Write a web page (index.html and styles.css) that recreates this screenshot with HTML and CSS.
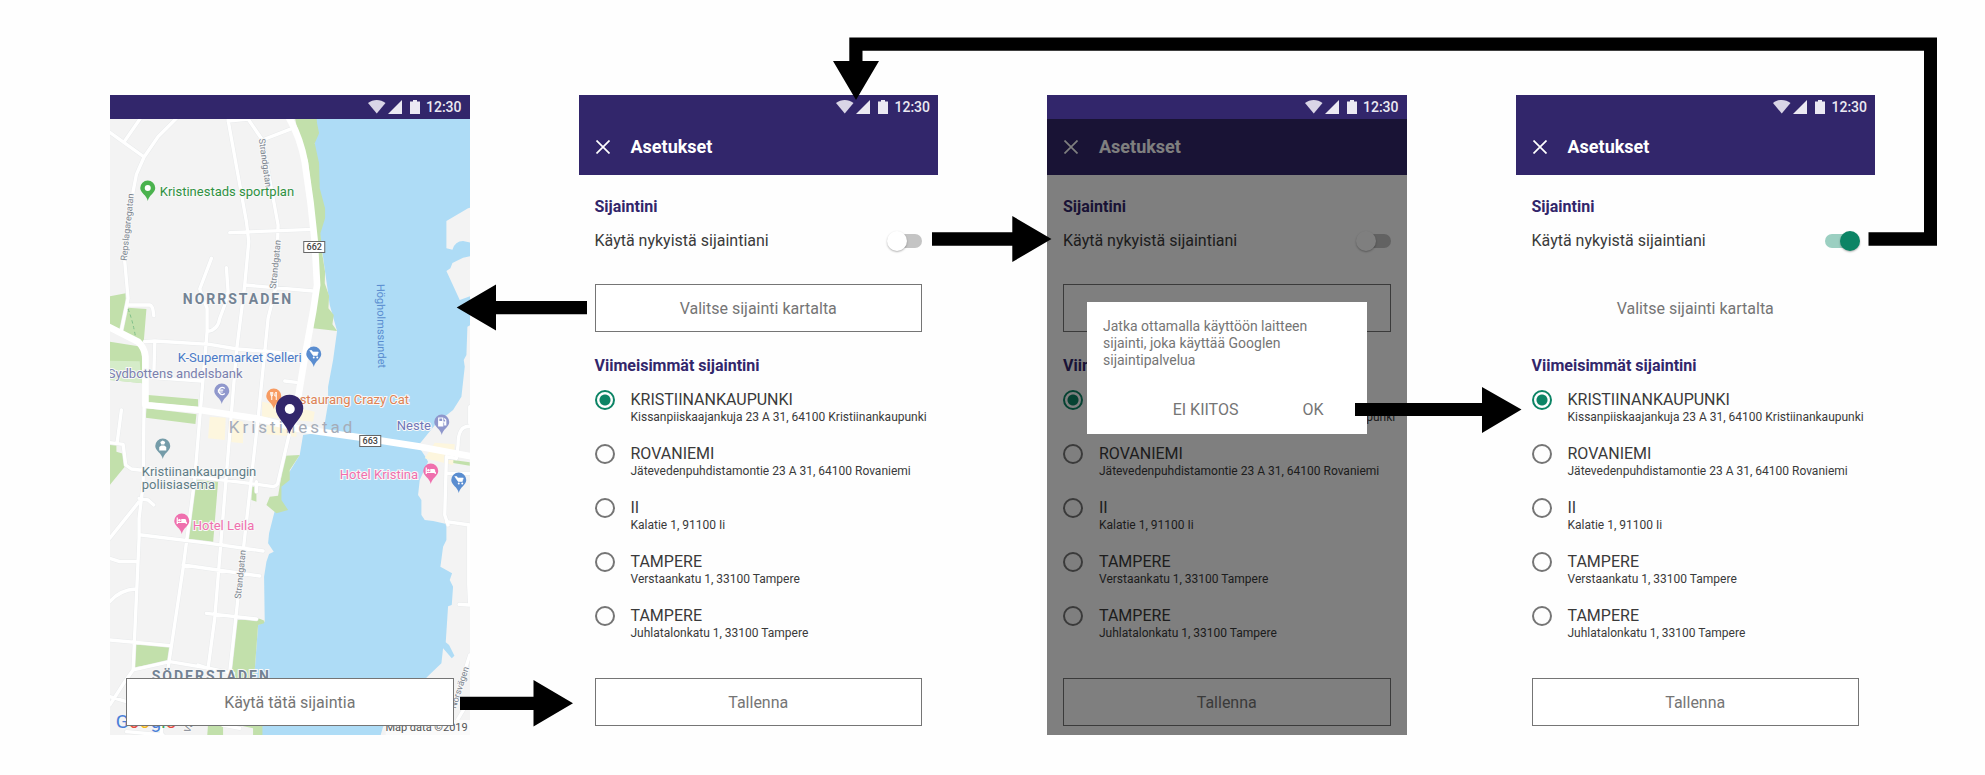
FILE: index.html
```html
<!DOCTYPE html>
<html lang="fi">
<head>
<meta charset="utf-8">
<title>Asetukset – Sijaintini</title>
<link rel="stylesheet" href="styles.css">
</head>
<body>
<svg class="sprite" aria-hidden="true">
  <symbol id="status-icons" viewBox="0 0 52 14">
    <path d="M0 3C5 -1 12.500 -1 17.500 3L8.750 13.500Z" fill="#d9d5e6"/>
    <path d="M20 14H34V0Z" fill="#ebe9f2"/>
    <path d="M42 1.500H45V0H49V1.500H52V14H42Z" fill="#ebe9f2"/>
  </symbol>
  <symbol id="close" viewBox="0 0 14 14">
    <path d="M0.500 0.500L13.500 13.500M13.500 0.500L0.500 13.500" stroke="currentColor" stroke-width="1.700" fill="none"/>
  </symbol>
  <symbol id="drop" viewBox="-8 -8 16 22" overflow="visible">
    <path d="M0 13C-1 7 -7.500 5 -7.500 0A7.500 7.500 0 0 1 7.500 0C7.500 5 1 7 0 13Z"/>
  </symbol>
</svg>

<main class="board">
  <section class="phone">
    <div class="status"><svg class="status-icons"><use href="#status-icons"/></svg><span>12:30</span></div>
    <div class="map-screen">
      <svg class="map" viewBox="0 0 360 616" preserveAspectRatio="xMidYMid slice" role="img" aria-label="Kartta">
        <rect width="361" height="616" fill="#f3f3f3"/>
        <g transform="scale(0.33333) translate(-30 -102)">
          <path class="water" d="M640 90H1120V365L1105 370L1040 408V490L1058 494Q1066 468 1090 468L1120 475V512L1090 518L1058 534L1052 550L1040 558L1080 645L1120 630V715L1103 725L1100 810L1092 825L1095 845L1085 935L1060 975L1010 1015L955 1082L975 1112L985 1130L960 1185L955 1230L965 1245V1290L975 1305L1000 1308L1040 1317V1365L1030 1385L1022 1445L1057 1465L1050 1485L1060 1505L1056 1560L1045 1564L1038 1672L1048 1680L1064 1712L1056 1720L1030 1690L1025 1735L985 1773L930 1830L850 1925L840 1960H480L465 1755L475 1620L495 1610L493 1475L500 1430L508 1407L522 1400L505 1375L508 1345L518 1305L545 1200L600 1110L610 1050L675 1040V1015L685 955V905L700 825L712 738L690 660L660 445L645 175Z"/>
          <path class="green" d="M585 95H650L652 115L658 145L645 175L658 235L660 310L676 370V400L662 445L668 510L676 560L675 595L688 632L686 670L702 690L698 718L712 738L640 730L655 620L645 400L625 230L590 120Z"/>
          <path class="green" d="M30 634L78 625V660L80 660L85 668L140 672L132 770L120 775L30 725Z"/>
          <path class="green" d="M30 770L125 785L130 895L30 885Z"/>
          <path d="M30 827L120 829L122 860L130 862V895L30 885Z" fill="#d5ecc9"/>
          <path class="green" d="M145 930L295 943V966L145 952ZM140 970L290 988L287 1017L138 998Z"/>
          <path class="green" d="M30 1080H50V1100L75 1108V1145L30 1200Z"/>
          <path class="green" d="M280 1185L355 1190L340 1373L262 1365L270 1280Z"/>
          <path class="green" d="M555 1112L600 1110L570 1155V1185L545 1205V1245L565 1275L530 1285L500 1260L510 1235L535 1232ZM455 1205H470V1250L455 1245Z"/>
          <path class="green" d="M410 1601L480 1601L494 1607L493 1615L475 1620L465 1755V1800H392Z"/>
          <path class="green" d="M108 1675L210 1685L205 1730L105 1747ZM325 1915H370V1960H322ZM425 1900H488V1960H460V1930L425 1922ZM1055 1124L1110 1132V1142L1060 1134Z"/>
          <path class="sand" d="M487 950L540 960L600 970L645 980L640 1010L487 995ZM330 995L378 998L375 1065L325 1060ZM388 1000L430 1010V1075L385 1070ZM500 1020L590 1035V1055L500 1048ZM1005 1073L1065 1078L1060 1140L975 1120Z"/>
          <g class="road-edge">
            <path id="streets" d="M20 135L72 172L133 216M72 172L122 100M235 95L175 155L133 216L110 268L100 320L75 530L85 640L65 735M85 660H150Q160 662 162 692M385 105L440 410L447 470L435 600L410 800L345 1600L325 1750L295 1740M385 108L445 102L488 165L578 130M488 165L535 420L530 600L505 700L475 1000L440 1310L408 1600L390 1760M390 443L640 433M335 520L300 612L322 670V740M322 740Q355 735 360 700L375 660L385 620L380 548M435 600L640 618M135 770L165 768L330 778L412 792L580 805M322 740L310 880L285 1180L250 1450L205 1750M165 775L162 878L305 888M555 888L590 892M133 950L130 1200L118 1300V1360L100 1755L75 1790L30 1860M30 1073L70 1078L78 1140L95 1152L285 1175L450 1195L520 1205Q535 1200 535 1190L568 1050M470 1190V1220M65 975L52 1075M118 1240L145 1245L162 1260M118 1250L30 1360M125 1350L330 1375L490 1398M30 1420L60 1430L110 1430M30 1550Q60 1515 108 1512M250 1440L480 1473M320 1585L470 1602M30 1665L212 1682M100 1755L210 1730L330 1750L400 1765M30 1835L80 1850M80 1940L190 1950M185 1920V1960M370 1920L420 1930M1110 1025Q1075 1020 1075 1080L1070 1120L1040 1115L1035 1290L1045 1320M1045 1165H1110M1110 965V1015M1040 1310L1110 1320M1107 1320V1500L1110 1560L1078 1558M1110 1710L1060 1870M1100 1860L1040 1960"/>
          </g>
          <use class="road" href="#streets"/>
          <path d="M85 672Q100 710 108 760" fill="none" stroke="#7fbf8a" stroke-width="3" stroke-dasharray="10 8"/>
          <path class="highway" d="M560 85Q600 150 615 230L632 350L645 470L652 600L640 680L618 800L585 1000L575 1030"/>
          <path class="highway" d="M20 722L115 770Q135 790 137 815V960L300 975L470 1000L590 1030L800 1060L960 1085L1120 1115"/>
        </g>
        <rect class="shield" x="194" y="122.500" width="21" height="11"/>
        <text class="shield-text" x="204.500" y="131">662</text>
        <rect class="shield" x="250" y="316.500" width="21" height="11"/>
        <text class="shield-text" x="260.500" y="325">663</text>

        <g class="street">
          <text transform="translate(149 20) rotate(82)">Strandgatan</text>
          <text transform="translate(17 142) rotate(-84)">Repslagaregatan</text>
          <text transform="translate(166 170) rotate(-84)">Strandgatan</text>
          <text transform="translate(131 480) rotate(-84)">Strandgatan</text>
          <text transform="translate(346 590) rotate(-72)">Norsvägen</text>
          <text transform="translate(80 614) rotate(-70)">Västra</text>
        </g>
        <text class="sound" transform="translate(267 165) rotate(89)">Högholmssundet</text>
        <text class="district" x="73" y="185">NORRSTADEN</text>
        <text class="district" x="42" y="562">SÖDERSTADEN</text>
        <text class="town" x="119" y="314">Kristinestad</text>
        <text class="poi" x="50" y="77" fill="#2f9142">Kristinestads sportplan</text>
        <text class="poi" x="68" y="243" fill="#4a7ac7">K-Supermarket Selleri</text>
        <text class="poi" x="-2" y="259" fill="#7a80ae">Sydbottens andelsbank</text>
        <text class="poi" x="175" y="285" fill="#dd8255">Restaurang Crazy Cat</text>
        <text class="poi" x="287" y="311" fill="#6f76b8">Neste</text>
        <text class="poi" x="32" y="357" fill="#607d86">Kristiinankaupungin</text>
        <text class="poi" x="32" y="370" fill="#607d86">poliisiasema</text>
        <text class="poi" x="230" y="360" fill="#ef70ae">Hotel Kristina</text>
        <text class="poi" x="83" y="411" fill="#ef70ae">Hotel Leila</text>

        <use href="#drop" x="30" y="61" width="16" height="22" fill="#4ab24e"/><circle cx="38" cy="69" r="3" fill="#fff"/>
        <g id="cart-a">
          <use href="#drop" x="196" y="227" width="16" height="22" fill="#5a8dd0"/>
          <path d="M200 231.500H202L203 233H208.500L207.500 236.500H203.500Z" fill="#fff" stroke="#fff" stroke-width="0.600"/><circle cx="204" cy="238.500" r="1" fill="#fff"/><circle cx="207.500" cy="238.500" r="1" fill="#fff"/>
        </g>
        <use href="#cart-a" x="145" y="126"/>
        <use href="#drop" x="104" y="264" width="16" height="22" fill="#8f97cc"/>
        <path d="M115 269.500A3.500 3.500 0 1 0 115 274.500M108 271.200H113.500M108 273H113" fill="none" stroke="#fff" stroke-width="1.200"/>
        <use href="#drop" x="156" y="269" width="16" height="22" fill="#f79b62"/>
        <path d="M161 273V275.500Q161 277 162 277V281M162 273V277M163 273V275.500Q163 277 162 277M166.500 281V273Q165 273.500 165 277H166.500" fill="none" stroke="#fff" stroke-width="1"/>
        <use href="#drop" x="324" y="295" width="16" height="22" fill="#8f97cc"/>
        <path d="M329 299H333V307H329ZM333 303H335V306H336V301L334.500 299.500" fill="none" stroke="#fff" stroke-width="1.200"/><path d="M329 302H333V307H329Z" fill="#fff"/>
        <use href="#drop" x="45" y="319" width="16" height="22" fill="#759ca9"/>
        <path d="M50.500 323L53 321.500L55.500 323L54.500 325.500H51.500ZM51.500 326.500H54.500L56.500 328V331.500H49.500V328Z" fill="#fff"/>
        <g id="bed-a">
          <use href="#drop" x="313" y="344" width="16" height="22" fill="#ef70ae"/>
          <path d="M316.500 348.500V355M316.500 353.500H325.500V355" fill="none" stroke="#fff" stroke-width="1.200"/><path d="M320.500 350H324Q325.500 350 325.500 352V353.500H320.500Z" fill="#fff"/><circle cx="318.700" cy="351.300" r="1.200" fill="#fff"/>
        </g>
        <use href="#bed-a" x="-249" y="50"/>
        <path d="M179.700 315C177 305 166 299 166 289.500A13.700 13.700 0 0 1 193.500 289.500C193.500 299 182.500 305 179.700 315Z" fill="#32266b"/>
        <circle cx="180" cy="290" r="5" fill="#fff"/>
        <text class="google" x="6" y="609"><tspan fill="#4a7fd8">G</tspan><tspan fill="#e64b3c">o</tspan><tspan fill="#f4b81c">o</tspan><tspan fill="#4a7fd8">g</tspan><tspan fill="#3ba757">l</tspan><tspan fill="#e64b3c">e</tspan></text>
        <rect x="276" y="601" width="85" height="15" fill="#fafafa"/>
        <text class="credit" x="358" y="612">Map data ©2019</text>
      </svg>
      <button class="btn map-btn" type="button">Käytä tätä sijaintia</button>
    </div>
  </section>

  <section class="phone">
    <div class="status"><svg class="status-icons"><use href="#status-icons"/></svg><span>12:30</span></div>
    <div class="screen">
      <header class="appbar"><button class="close" type="button" aria-label="Sulje"><svg><use href="#close"/></svg></button><h1>Asetukset</h1></header>
      <form class="settings">
        <h2>Sijaintini</h2>
        <label class="toggle"><span>Käytä nykyistä sijaintiani</span><input type="checkbox" role="switch"></label>
        <button class="btn" type="button">Valitse sijainti kartalta</button>
        <h2 class="recent">Viimeisimmät sijaintini</h2>
        <div class="places">
          <label class="place"><input type="radio" name="a" checked><span><b>KRISTIINANKAUPUNKI</b><small>Kissanpiiskaajankuja 23 A 31, 64100 Kristiinankaupunki</small></span></label>
          <label class="place"><input type="radio" name="a"><span><b>ROVANIEMI</b><small>Jätevedenpuhdistamontie 23 A 31, 64100 Rovaniemi</small></span></label>
          <label class="place"><input type="radio" name="a"><span><b>II</b><small>Kalatie 1, 91100 Ii</small></span></label>
          <label class="place"><input type="radio" name="a"><span><b>TAMPERE</b><small>Verstaankatu 1, 33100 Tampere</small></span></label>
          <label class="place"><input type="radio" name="a"><span><b>TAMPERE</b><small>Juhlatalonkatu 1, 33100 Tampere</small></span></label>
        </div>
        <button class="btn" type="button">Tallenna</button>
      </form>
    </div>
  </section>

  <section class="phone">
    <div class="status"><svg class="status-icons"><use href="#status-icons"/></svg><span>12:30</span></div>
    <div class="screen">
      <header class="appbar"><button class="close" type="button" aria-label="Sulje"><svg><use href="#close"/></svg></button><h1>Asetukset</h1></header>
      <form class="settings">
        <h2>Sijaintini</h2>
        <label class="toggle"><span>Käytä nykyistä sijaintiani</span><input type="checkbox" role="switch"></label>
        <button class="btn" type="button" aria-label="Valitse sijainti kartalta"></button>
        <h2 class="recent">Viimeisimmät sijaintini</h2>
        <div class="places">
          <label class="place"><input type="radio" name="b" checked><span><b>KRISTIINANKAUPUNKI</b><small>Kissanpiiskaajankuja 23 A 31, 64100 Kristiinankaupunki</small></span></label>
          <label class="place"><input type="radio" name="b"><span><b>ROVANIEMI</b><small>Jätevedenpuhdistamontie 23 A 31, 64100 Rovaniemi</small></span></label>
          <label class="place"><input type="radio" name="b"><span><b>II</b><small>Kalatie 1, 91100 Ii</small></span></label>
          <label class="place"><input type="radio" name="b"><span><b>TAMPERE</b><small>Verstaankatu 1, 33100 Tampere</small></span></label>
          <label class="place"><input type="radio" name="b"><span><b>TAMPERE</b><small>Juhlatalonkatu 1, 33100 Tampere</small></span></label>
        </div>
        <button class="btn" type="button">Tallenna</button>
      </form>
      <div class="scrim">
        <div class="dialog" role="dialog" aria-label="Sijaintipalvelu">
          <p>Jatka ottamalla käyttöön laitteen sijainti, joka käyttää Googlen sijaintipalvelua</p>
          <div class="actions"><button type="button">EI KIITOS</button><button type="button">OK</button></div>
        </div>
      </div>
    </div>
  </section>

  <section class="phone">
    <div class="status"><svg class="status-icons"><use href="#status-icons"/></svg><span>12:30</span></div>
    <div class="screen">
      <header class="appbar"><button class="close" type="button" aria-label="Sulje"><svg><use href="#close"/></svg></button><h1>Asetukset</h1></header>
      <form class="settings">
        <h2>Sijaintini</h2>
        <label class="toggle"><span>Käytä nykyistä sijaintiani</span><input type="checkbox" role="switch" checked></label>
        <button class="btn plain" type="button">Valitse sijainti kartalta</button>
        <h2 class="recent">Viimeisimmät sijaintini</h2>
        <div class="places">
          <label class="place"><input type="radio" name="c" checked><span><b>KRISTIINANKAUPUNKI</b><small>Kissanpiiskaajankuja 23 A 31, 64100 Kristiinankaupunki</small></span></label>
          <label class="place"><input type="radio" name="c"><span><b>ROVANIEMI</b><small>Jätevedenpuhdistamontie 23 A 31, 64100 Rovaniemi</small></span></label>
          <label class="place"><input type="radio" name="c"><span><b>II</b><small>Kalatie 1, 91100 Ii</small></span></label>
          <label class="place"><input type="radio" name="c"><span><b>TAMPERE</b><small>Verstaankatu 1, 33100 Tampere</small></span></label>
          <label class="place"><input type="radio" name="c"><span><b>TAMPERE</b><small>Juhlatalonkatu 1, 33100 Tampere</small></span></label>
        </div>
        <button class="btn" type="button">Tallenna</button>
      </form>
    </div>
  </section>

  <svg class="arrows" viewBox="0 0 1985 775" preserveAspectRatio="none" aria-hidden="true">
    <path d="M1868.500 232.300H1924V50.700H862.500V61H879L856 100L833 61H849.300V37.500H1937V245.700H1868.500Z"/>
    <path d="M932 232.300H1012.300V216L1051.500 239L1012.300 262V245.700H932Z"/>
    <path d="M587 301V314.300H496V330.500L456.700 307.500L496 284.500V301Z"/>
    <path d="M460 696.700H533.500V680L573 703.300L533.500 726.500V710H460Z"/>
    <path d="M1355 403H1482V387L1521.500 409.500L1482 433V416H1355Z"/>
  </svg>
</main>
</body>
</html>
```
FILE: styles.css
```css
* { box-sizing: border-box; }

body {
  margin: 0;
  background: #fefefe;
  color: #3a3a3a;
  font-family: Roboto, "Liberation Sans", sans-serif;
  font-size: 16px;
}

h1, h2, p { margin: 0; }

button { padding: 0; font: inherit; cursor: pointer; }

.sprite { position: absolute; width: 0; height: 0; }

.board {
  position: relative;
  display: grid;
  grid-template-columns: repeat(4, minmax(0, 1fr));
  column-gap: 109px;
  padding: 95px 110px 40px;
}

.arrows {
  position: absolute;
  inset: 0;
  width: 100%;
  height: 100%;
  pointer-events: none;
}

.phone { display: flex; flex-direction: column; }

.status {
  display: flex;
  align-items: center;
  justify-content: flex-end;
  gap: 6px;
  height: 24px;
  padding-right: 8px;
  background: #32266b;
  color: #ebe9f2;
  font-size: 14px;
  font-weight: 500;
}

.status-icons { width: 52px; height: 14px; }

.screen { position: relative; flex: 1; }

.appbar {
  display: flex;
  align-items: center;
  gap: 21px;
  height: 56px;
  padding: 0 17px;
  background: #32266b;
  color: #fff;
}

.appbar h1 { font-size: 18px; font-weight: 700; line-height: 24px; }

.close { display: flex; border: 0; background: none; color: inherit; }
.close svg { width: 14px; height: 14px; }

.settings {
  display: flex;
  flex-direction: column;
  padding: 20px 16px 9px;
}

.settings h2 {
  color: #32266b;
  font-size: 16px;
  font-weight: 700;
  line-height: 24px;
}

.settings .recent { margin: 22px 0 12px; }

.toggle {
  display: flex;
  align-items: center;
  justify-content: space-between;
  margin: 10px 0 31px;
  line-height: 24px;
}

.toggle input {
  appearance: none;
  display: flex;
  align-items: center;
  width: 34px;
  height: 14px;
  margin: 0;
  border-radius: 7px;
  background: #c4c4c4;
}

.toggle input::before {
  content: "";
  flex: none;
  width: 20px;
  height: 20px;
  margin-left: -1px;
  border-radius: 50%;
  background: #fff;
  box-shadow: 0 1px 2px rgba(0, 0, 0, .3);
}

.toggle input:checked { background: #9bcfc1; }
.toggle input:checked::before { margin-left: 15px; background: #0c8465; }

.btn {
  height: 48px;
  border: 1px solid #757575;
  background: #fff;
  color: #757575;
}

.btn.plain { border-color: transparent; background: none; }

.places { display: grid; gap: 20px; margin-bottom: 38px; }

.place { display: flex; align-items: flex-start; gap: 16px; white-space: nowrap; }

.place input {
  appearance: none;
  flex: none;
  width: 20px;
  height: 20px;
  margin: 0;
  border: 2px solid #757575;
  border-radius: 50%;
}

.place input:checked {
  border-color: #0c8465;
  background: radial-gradient(circle, #0c8465 5px, transparent 6px);
}

.place b, .place small { display: block; font-weight: 400; }
.place b { line-height: 20px; }
.place small { font-size: 12px; line-height: 14px; }

.scrim {
  position: absolute;
  inset: 0;
  padding: 183px 40px 0;
  background: rgba(0, 0, 0, .5);
}

.dialog {
  padding: 16px 16px 12px;
  background: #fff;
  color: #757575;
}

.dialog p { font-size: 14px; line-height: 17px; }

.actions {
  display: flex;
  justify-content: flex-end;
  gap: 64px;
  padding: 29px 27px 0 0;
}

.actions button {
  border: 0;
  background: none;
  color: inherit;
  line-height: 24px;
}

.map-screen {
  position: relative;
  display: flex;
  flex: 1;
  flex-direction: column;
  justify-content: flex-end;
  padding: 0 16px 9px;
}

.map { position: absolute; inset: 0; width: 100%; height: 100%; }
.map-btn { position: relative; }

.water { fill: #aedcf6; }
.green { fill: #c2e0ab; }
.sand { fill: #fdf6de; }
.road, .road-edge { fill: none; stroke-linecap: round; stroke-linejoin: round; }
.road-edge { stroke: #e9ebec; stroke-width: 13; }
#streets { stroke: inherit; stroke-width: inherit; }
.road { stroke: #fff; stroke-width: 10; }
.highway { fill: none; stroke: #fff; stroke-width: 20; stroke-linejoin: round; }
.shield { fill: #fff; stroke: #666; }
.shield-text { fill: #444; font-size: 9px; font-weight: 500; text-anchor: middle; }
.street text { fill: #7c858f; font-size: 9px; stroke: #f8f8f8; stroke-width: 2; paint-order: stroke; }
.sound { fill: #5a8dd0; font-size: 11px; }
.district { fill: #738394; font-size: 14px; font-weight: 700; letter-spacing: 2px; stroke: #f8f8f8; stroke-width: 2; paint-order: stroke; }
.town { fill: #a5acb8; font-size: 17px; letter-spacing: 3px; }
.poi { font-size: 13px; stroke: #f8f8f8; stroke-width: 2; paint-order: stroke; }
.google { font-size: 19px; }
.credit { fill: #555; font-size: 11px; text-anchor: end; }
```
